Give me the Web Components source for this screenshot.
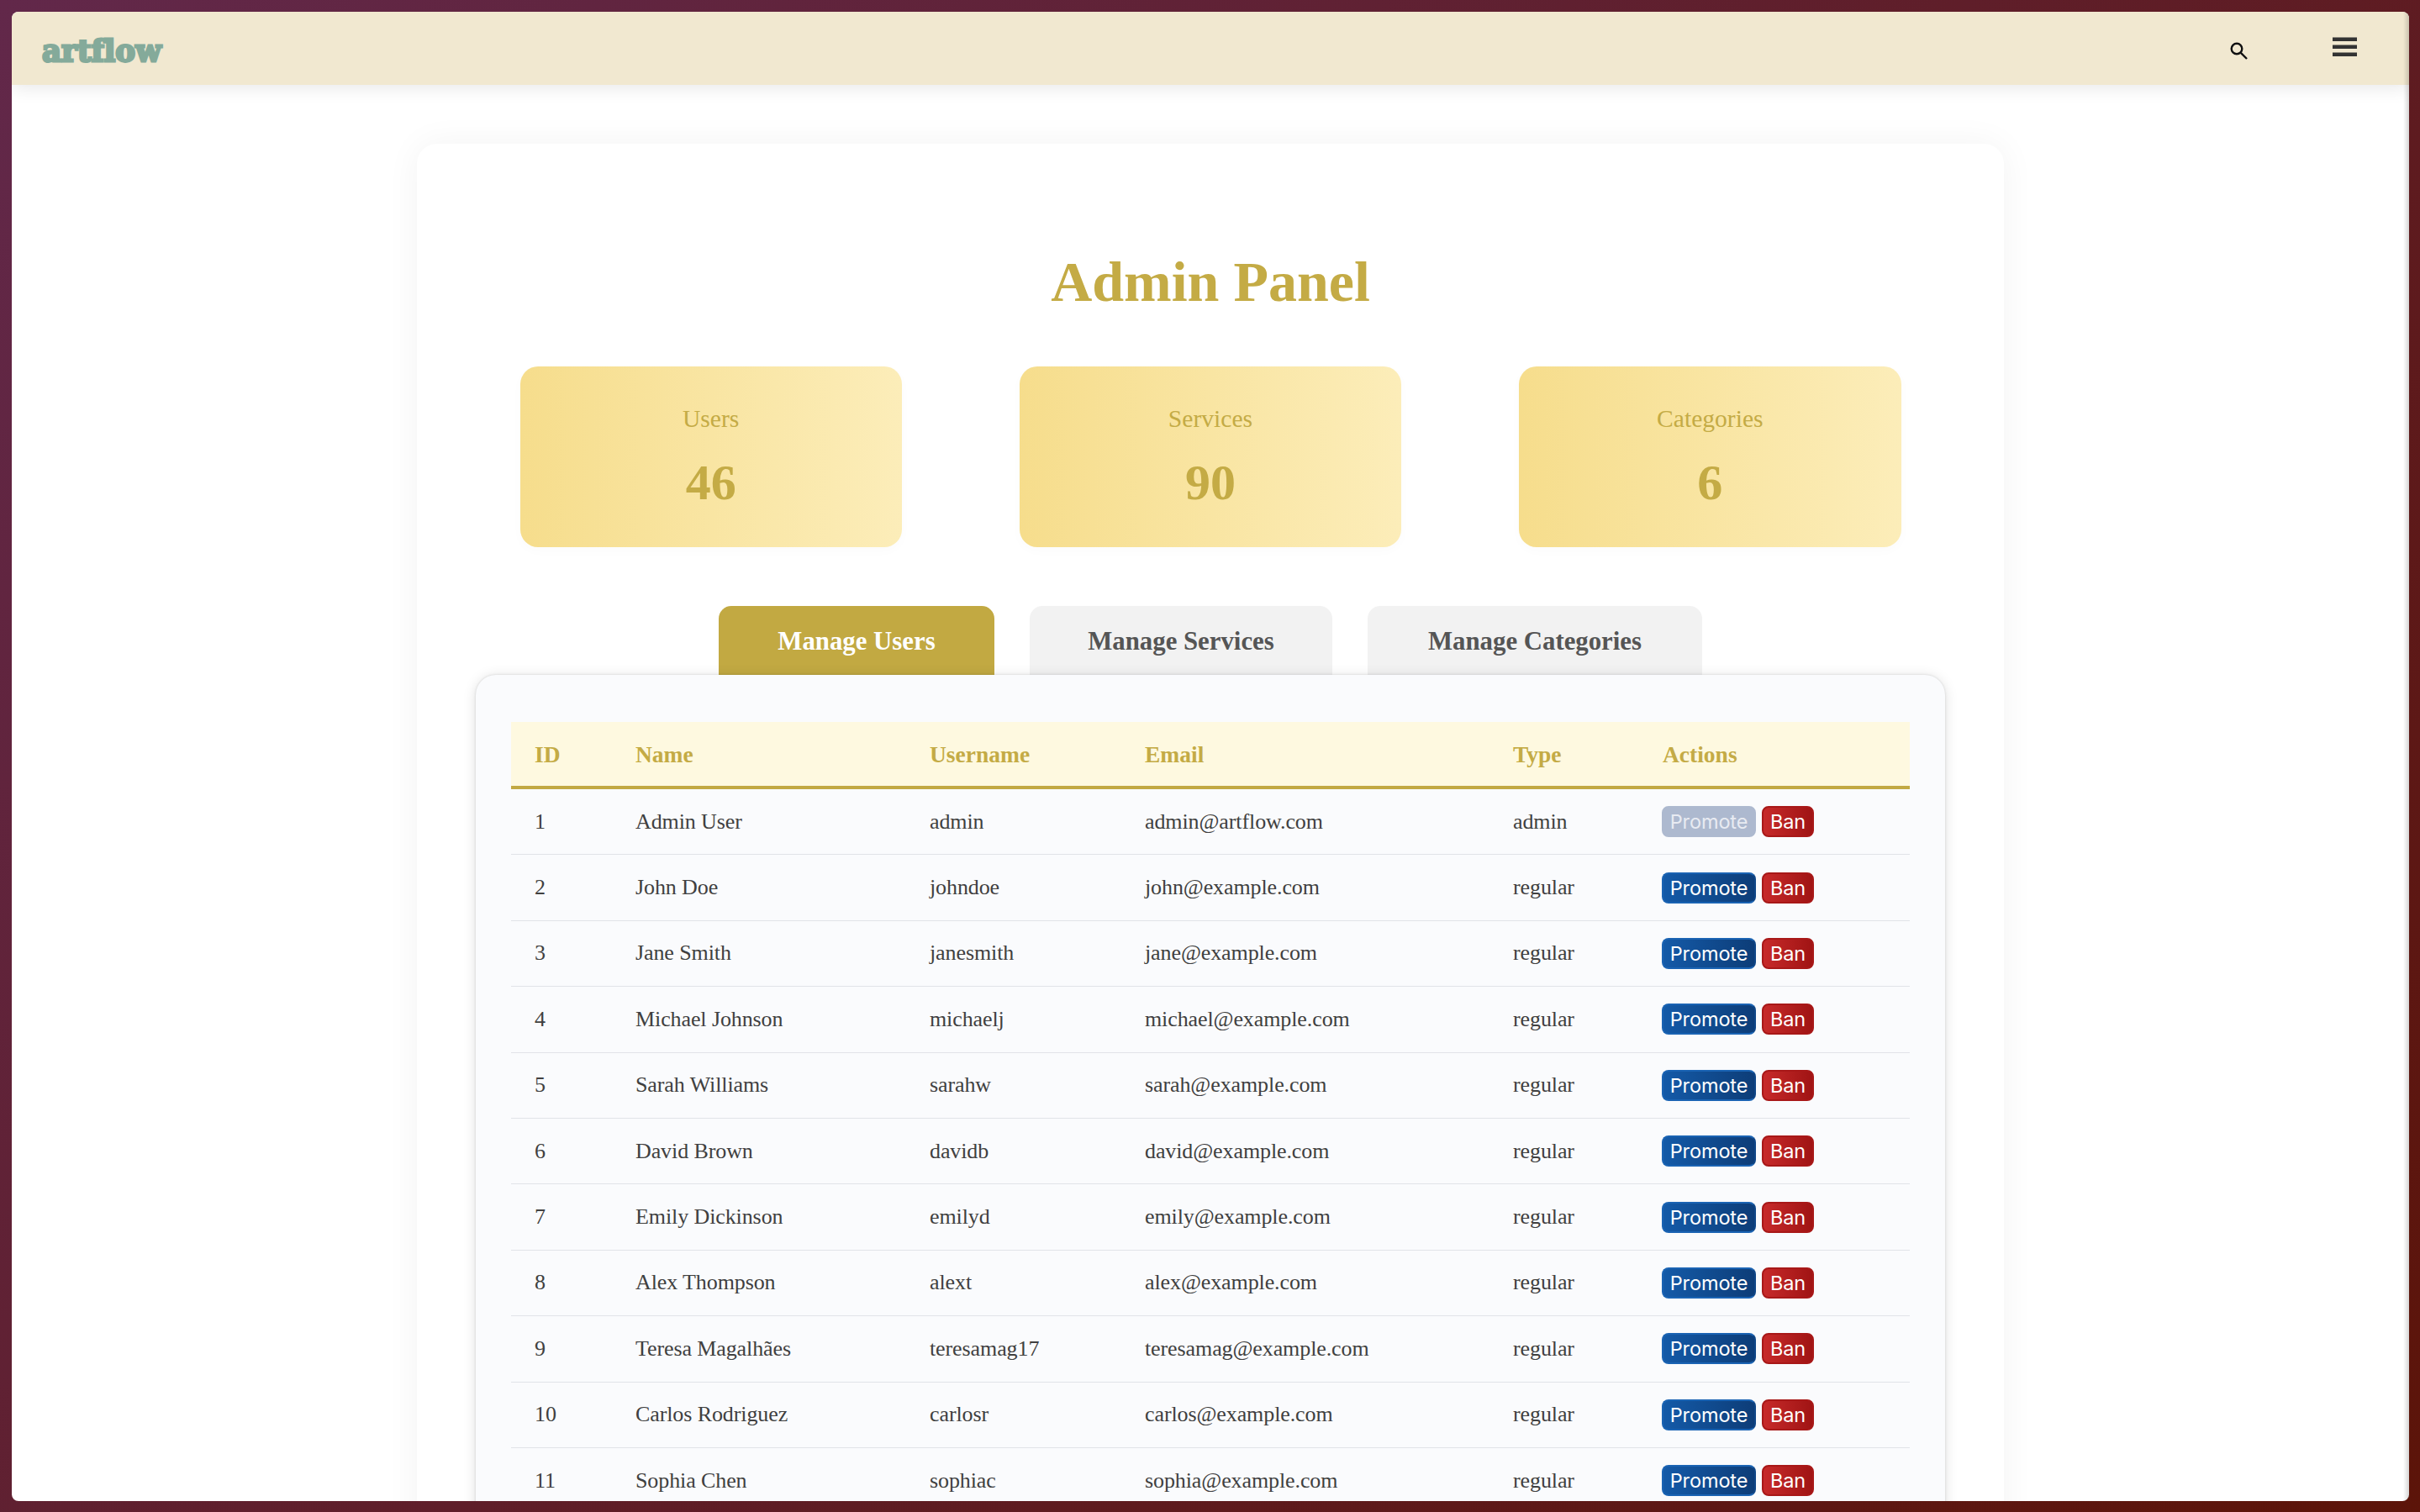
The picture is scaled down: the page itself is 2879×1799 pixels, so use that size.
<!DOCTYPE html>
<html lang="en"><head><meta charset="utf-8"><title>artflow</title>
<style>
html,body{margin:0;height:100%;overflow:hidden}
body{background:linear-gradient(135deg,#62284a,#5c1409);padding:14px 13px 13px 14px;box-sizing:border-box;font-family:"Liberation Serif",serif}
</style></head><body>
<app-frame>
<app-header slot="header"></app-header>
<admin-panel></admin-panel>
</app-frame>
<script>
class AppFrame extends HTMLElement{constructor(){super();this.attachShadow({mode:'open'}).innerHTML=`<style>
:host{display:flex;flex-direction:column;height:100%;background:#fff;border-radius:8px;overflow:hidden;position:relative}
.edge{position:absolute;top:0;bottom:0;right:0;width:7px;background:linear-gradient(to right,rgba(0,0,0,0),rgba(0,0,0,.16));pointer-events:none;z-index:3}
</style><slot name="header"></slot><slot></slot><div class="edge"></div>`}}
customElements.define('app-frame',AppFrame);

class AppHeader extends HTMLElement{constructor(){super();this.attachShadow({mode:'open'}).innerHTML=`<style>
:host{display:flex;flex:none;height:87px;background:#f1e8d0;box-shadow:0 4px 20px rgba(0,0,0,.09);align-items:flex-start;position:relative;z-index:2;box-sizing:border-box;padding:0 62px 0 36px}
.logo{font:700 35.5px "DejaVu Serif",serif;color:#84aa9a;-webkit-text-stroke:2.8px #84aa9a;letter-spacing:.1px;margin-top:25px;line-height:44px}
.sp{flex:1}
svg{display:block}
.s{margin-top:36px;margin-right:101px}
.m{margin-top:30px}
</style><div class="logo">artflow</div><div class="sp"></div>
<svg class="s" width="21" height="21" viewBox="0 0 21 21" fill="none" stroke="#111" stroke-width="2.4"><circle cx="8" cy="8" r="6.3"/><path d="M12.6 12.6 20 20"/></svg>
<svg class="m" width="29" height="24" viewBox="0 0 29 24" fill="#333"><rect y="0.5" width="29" height="4.5"/><rect y="9.5" width="29" height="4.5"/><rect y="18.5" width="29" height="4.5"/></svg>`}}
customElements.define('app-header',AppHeader);

class StatCard extends HTMLElement{constructor(){super();this.attachShadow({mode:'open'}).innerHTML=`<style>
:host{display:flex;flex-direction:column;align-items:center;height:215px;border-radius:21px;background:linear-gradient(90deg,#f6dd8c,#fcedb9);box-shadow:0 4px 14px rgba(0,0,0,.02);color:#c4ab45;box-sizing:border-box;padding-top:42px}
.l{font-size:29.6px;line-height:40px}
.v{font-size:60px;font-weight:700;line-height:70px;margin-top:21px}
</style><div class="l"><slot name="label"></slot></div><div class="v"><slot name="value"></slot></div>`}}
customElements.define('stat-card',StatCard);

class TabButton extends HTMLElement{constructor(){super();this.attachShadow({mode:'open'}).innerHTML=`<style>
:host{display:block;height:82px;border-radius:15px 15px 0 0;background:#f2f2f2;color:#555;font-size:30.8px;font-weight:700;line-height:84px;box-sizing:border-box;text-align:center}
:host([active]){background:#c2a942;color:#fff}
</style><slot></slot>`}}
customElements.define('tab-button',TabButton);

class ActionButton extends HTMLElement{constructor(){super();this.attachShadow({mode:'open'}).innerHTML=`<style>
:host{display:inline-block;box-sizing:border-box;height:37px;border-radius:8px;font:400 23.5px/33px Inter,sans-serif;color:#fff;text-align:center;border:2px solid;vertical-align:top}
:host([kind=promote]){width:112px;background:linear-gradient(90deg,#145aa8,#0d3d78);border-color:#1a63b3 #0f4687 #1a63b3 #1a63b3}
:host([kind=ban]){width:62px;background:linear-gradient(90deg,#c72a2a,#a01414);border-color:#a81818}
:host([disabled]){background:#adb9cf;border-color:#adb9cf;color:#e8ebf2}
</style><slot></slot>`}}
customElements.define('action-button',ActionButton);

const rows=[[1,'Admin User','admin','admin@artflow.com','admin'],[2,'John Doe','johndoe','john@example.com','regular'],[3,'Jane Smith','janesmith','jane@example.com','regular'],[4,'Michael Johnson','michaelj','michael@example.com','regular'],[5,'Sarah Williams','sarahw','sarah@example.com','regular'],[6,'David Brown','davidb','david@example.com','regular'],[7,'Emily Dickinson','emilyd','emily@example.com','regular'],[8,'Alex Thompson','alext','alex@example.com','regular'],[9,'Teresa Magalhães','teresamag17','teresamag@example.com','regular'],[10,'Carlos Rodriguez','carlosr','carlos@example.com','regular'],[11,'Sophia Chen','sophiac','sophia@example.com','regular']];
class UserTable extends HTMLElement{constructor(){super();
const body=rows.map(r=>`<tr>${r.map(c=>`<td>${c}</td>`).join('')}<td class="a"><div class="acts"><action-button kind="promote"${r[4]==='admin'?' disabled':''}>Promote</action-button><action-button kind="ban">Ban</action-button></div></td></tr>`).join('');
this.attachShadow({mode:'open'}).innerHTML=`<style>
:host{display:block}
table{border-collapse:separate;border-spacing:0;width:1664px;table-layout:fixed;font-size:26px;letter-spacing:-.1px;color:#404040}
th{padding:2px 0 0 28px;background:#fef9e0;color:#c4ab45;font-weight:700;font-size:27.5px;letter-spacing:0;text-align:left;border-bottom:4px solid #c2a942;box-sizing:border-box;height:80px}
td{height:77.4px;padding:0 0 0 28px;border-bottom:1px solid #e1e3e8;box-sizing:content-box}
.acts{display:flex;gap:7px;margin-left:-1px}
</style><table><colgroup><col style="width:120px"><col style="width:350px"><col style="width:256px"><col style="width:438px"><col style="width:178px"><col style="width:322px"></colgroup>
<thead><tr><th>ID</th><th>Name</th><th>Username</th><th>Email</th><th>Type</th><th>Actions</th></tr></thead><tbody>${body}</tbody></table>`}}
customElements.define('user-table',UserTable);

class AdminPanel extends HTMLElement{constructor(){super();this.attachShadow({mode:'open'}).innerHTML=`<style>
:host{display:block;flex:1;min-height:0;padding-top:70px;overflow:hidden}
.card{width:1888px;margin:0 auto;background:#fff;border-radius:24px;box-shadow:0 0 40px rgba(0,0,0,.05);box-sizing:border-box;padding:0 70px;height:1700px;display:flex;flex-direction:column}
h1{margin:0;padding-top:122px;height:265px;box-sizing:border-box;text-align:center;font-size:68px;line-height:84px;font-weight:700;color:#c4ab45}
.stats{display:grid;grid-template-columns:repeat(3,1fr);gap:140px;padding:0 52.5px}
.tabs{display:flex;justify-content:center;gap:42px;margin-top:70px}
.tabs>:nth-child(1){width:328px}.tabs>:nth-child(2){width:360px}.tabs>:nth-child(3){width:398px}
.box{position:relative;background:#fafbfd;border-radius:24px;box-shadow:0 0 3px rgba(0,0,0,.14),0 2px 16px rgba(0,0,0,.13);padding:56px 42px 0;flex:1}
</style><div class="card"><h1>Admin Panel</h1>
<div class="stats">
<stat-card><span slot="label">Users</span><span slot="value">46</span></stat-card>
<stat-card><span slot="label">Services</span><span slot="value">90</span></stat-card>
<stat-card><span slot="label">Categories</span><span slot="value">6</span></stat-card>
</div>
<div class="tabs"><tab-button active>Manage Users</tab-button><tab-button>Manage Services</tab-button><tab-button>Manage Categories</tab-button></div>
<div class="box"><user-table></user-table></div>
</div>`}}
customElements.define('admin-panel',AdminPanel);
</script>
</body></html>
